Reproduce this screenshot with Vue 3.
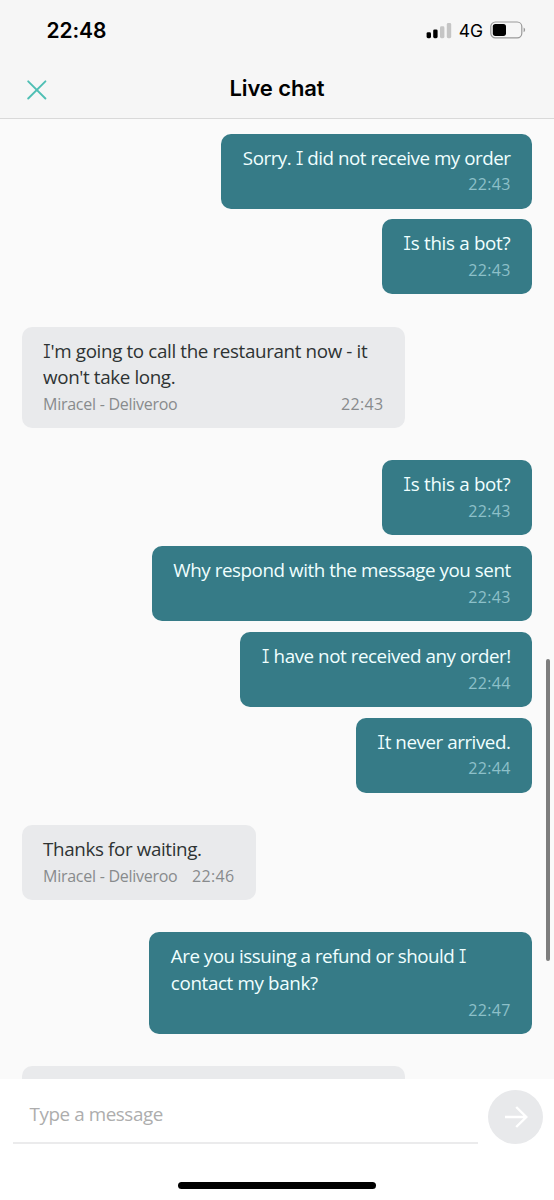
<script setup>
const groups = [
  {
    mine: true,
    messages: [
      { width: 311, time: '22:43', lines: [{ text: 'Sorry. I did not receive my order', tracking: -0.48 }] },
      { width: 150.5, time: '22:43', lines: [{ text: 'Is this a bot?', tracking: -0.31 }] },
    ],
  },
  {
    agent: 'Miracel - Deliveroo',
    messages: [
      {
        width: 383.5,
        time: '22:43',
        lines: [
          { text: "I'm going to call the restaurant now - it", tracking: -0.36 },
          { text: "won't take long.", tracking: -0.38 },
        ],
      },
    ],
  },
  {
    mine: true,
    messages: [
      { width: 150.5, time: '22:43', lines: [{ text: 'Is this a bot?', tracking: -0.31 }] },
      { width: 380.5, time: '22:43', lines: [{ text: 'Why respond with the message you sent', tracking: -0.44 }] },
      { width: 292, time: '22:44', lines: [{ text: 'I have not received any order!', tracking: -0.45 }] },
      { width: 176.5, time: '22:44', lines: [{ text: 'It never arrived.', tracking: -0.45 }] },
    ],
  },
  {
    agent: 'Miracel - Deliveroo',
    messages: [{ width: 234.5, time: '22:46', lines: [{ text: 'Thanks for waiting.', tracking: -0.37 }] }],
  },
  {
    mine: true,
    messages: [
      {
        width: 383,
        time: '22:47',
        lines: [
          { text: 'Are you issuing a refund or should I', tracking: -0.49 },
          { text: 'contact my bank?', tracking: -0.36 },
        ],
      },
    ],
  },
]

// Splits a line so that the capital I can take its slab-serif form.
const parts = (line) => line.split(/(I)/).filter(Boolean)
</script>

<template>
  <div class="screen">
    <header class="top">
      <div class="status">
        <span class="clock">22:48</span>
        <div class="indicators">
          <svg class="signal" width="26" height="16" viewBox="0 0 26 16">
            <rect x="0.6" y="9.2" width="4.4" height="6" rx="1.4" fill="#000" />
            <rect x="7.2" y="6.4" width="4.4" height="8.8" rx="1.4" fill="#000" />
            <rect x="14" y="3.3" width="4.4" height="11.9" rx="1.4" fill="#c5c5c5" />
            <rect x="20.8" y="0" width="4.4" height="15.2" rx="1.4" fill="#c5c5c5" />
          </svg>
          <span class="network">4G</span>
          <svg class="battery" width="36" height="18" viewBox="0 0 36 18">
            <rect x="0.8" y="1" width="31" height="15.8" rx="4.6" fill="none" stroke="#999" stroke-width="1.2" />
            <rect x="2.8" y="2.9" width="13.2" height="12" rx="2.6" fill="#000" />
            <path d="M33.6 6.5C35.6 7.4 35.6 10.4 33.6 11.3Z" fill="#999" />
          </svg>
        </div>
      </div>
      <div class="title-row">
        <svg class="close" width="20" height="20" viewBox="0 0 20 20">
          <path d="M1.2 1.3L18.4 18.5M18.4 1.3L1.2 18.5" fill="none" stroke="#4fbfb4" stroke-width="1.9" stroke-linecap="round" />
        </svg>
        <h1>Live chat</h1>
      </div>
    </header>

    <main class="chat">
      <section v-for="(g, gi) in groups" :key="gi" class="group" :class="{ mine: g.mine }">
        <article v-for="(m, mi) in g.messages" :key="mi" class="bubble" :style="{ width: m.width + 'px' }">
          <p v-for="line in m.lines" :key="line.text" class="line" :style="{ letterSpacing: line.tracking + 'px' }"><span v-for="(p, pi) in parts(line.text)" :key="pi" :class="{ slab: p === 'I' }">{{ p }}</span></p>
          <div class="meta">
            <span v-if="g.agent" class="agent">{{ g.agent }}</span>
            <time>{{ m.time }}</time>
          </div>
        </article>
      </section>
      <section class="group">
        <article class="bubble next"></article>
      </section>
      <div class="scrollbar"></div>
    </main>

    <footer class="composer">
      <div class="entry">
        <div class="field">Type a message</div>
        <button class="send">
          <svg width="24" height="24" viewBox="0 0 24 24">
            <path d="M1 12H22M12.2 2L22.3 12L12.2 22" fill="none" stroke="#fff" stroke-width="2.4" />
          </svg>
        </button>
      </div>
      <div class="home"></div>
    </footer>
  </div>
</template>

<style>
body { margin: 0; background: #fafafa; }
</style>

<style scoped>
.screen {
  width: 554px;
  height: 1200px;
  display: flex;
  flex-direction: column;
  overflow: hidden;
  background: #fafafa;
  font-family: "Open Sans", "Noto Sans", sans-serif;
}
.top {
  box-sizing: border-box;
  height: 119px;
  flex: none;
  background: #f6f6f6;
  border-bottom: 1.5px solid #d9d9d9;
  font-family: Inter, sans-serif;
  color: #000;
}
.status {
  height: 60px;
  display: flex;
  justify-content: space-between;
  align-items: center;
  padding: 0 28px 0 46.5px;
}
.clock { font-size: 21px; font-weight: 600; letter-spacing: -0.1px; }
.indicators { display: flex; align-items: center; }
.signal { margin: 1px 7px 0 0; }
.network { font-size: 17.5px; font-weight: 400; letter-spacing: -0.1px; margin: 1px 7px 0 0; }
.title-row {
  position: relative;
  height: 56px;
  display: flex;
  justify-content: center;
  align-items: center;
}
.close { position: absolute; left: 27.2px; top: 20px; }
h1 { margin: 0; font-size: 22px; font-weight: 600; letter-spacing: -0.1px; }
.chat {
  position: relative;
  box-sizing: border-box;
  height: 960px;
  flex: none;
  overflow: hidden;
  padding: 14.6px 21.7px 0 21.6px;
  display: flex;
  flex-direction: column;
  gap: 32.2px;
}
.group {
  flex: none;
  display: flex;
  flex-direction: column;
  align-items: flex-start;
  gap: 10.75px;
}
.group.mine { align-items: flex-end; }
.bubble {
  box-sizing: border-box;
  padding: 11px 21.5px 11.1px;
  border-radius: 10px;
  background: #e9eaec;
  color: #2e3333;
}
.mine .bubble { background: #367b87; color: #f0ffff; }
.line {
  margin: 0;
  height: 26.8px;
  line-height: 26.8px;
  font-size: 18.8px;
  white-space: pre;
}
.slab { font-family: Inter, sans-serif; font-feature-settings: "cv08"; font-size: 18.6px; font-weight: 300; }
.meta {
  height: 26.1px;
  line-height: 26px;
  display: flex;
  justify-content: space-between;
  font-size: 16px;
  color: #888b8d;
  white-space: nowrap;
}
.agent { letter-spacing: -0.27px; }
.meta time { margin-left: auto; letter-spacing: 0.35px; }
.mine .meta { color: #8dc0c9; }
.next { width: 383.5px; height: 102px; }
.scrollbar {
  position: absolute;
  right: 4px;
  top: 540px;
  width: 4px;
  height: 302px;
  border-radius: 2px;
  background: #7d7d7d;
}
.composer {
  flex: 1;
  background: #fff;
  display: flex;
  flex-direction: column;
  align-items: center;
}
.entry {
  box-sizing: border-box;
  width: 100%;
  height: 65px;
  padding: 0 11px 0 13px;
  display: flex;
  justify-content: space-between;
}
.field {
  box-sizing: border-box;
  width: 465px;
  height: 65px;
  padding: 0 16.5px;
  border-bottom: 2px solid #ebebec;
  line-height: 71px;
  font-size: 18.8px;
  letter-spacing: -0.4px;
  color: #adadad;
}
.send {
  width: 55px;
  height: 54px;
  margin: 11px 0 0;
  padding: 0;
  border: 0;
  border-radius: 50%;
  background: #e8e9eb;
  display: flex;
  align-items: center;
  justify-content: center;
}
.home { width: 198px; height: 7px; margin-top: 38px; border-radius: 4px; background: #000; }
</style>
